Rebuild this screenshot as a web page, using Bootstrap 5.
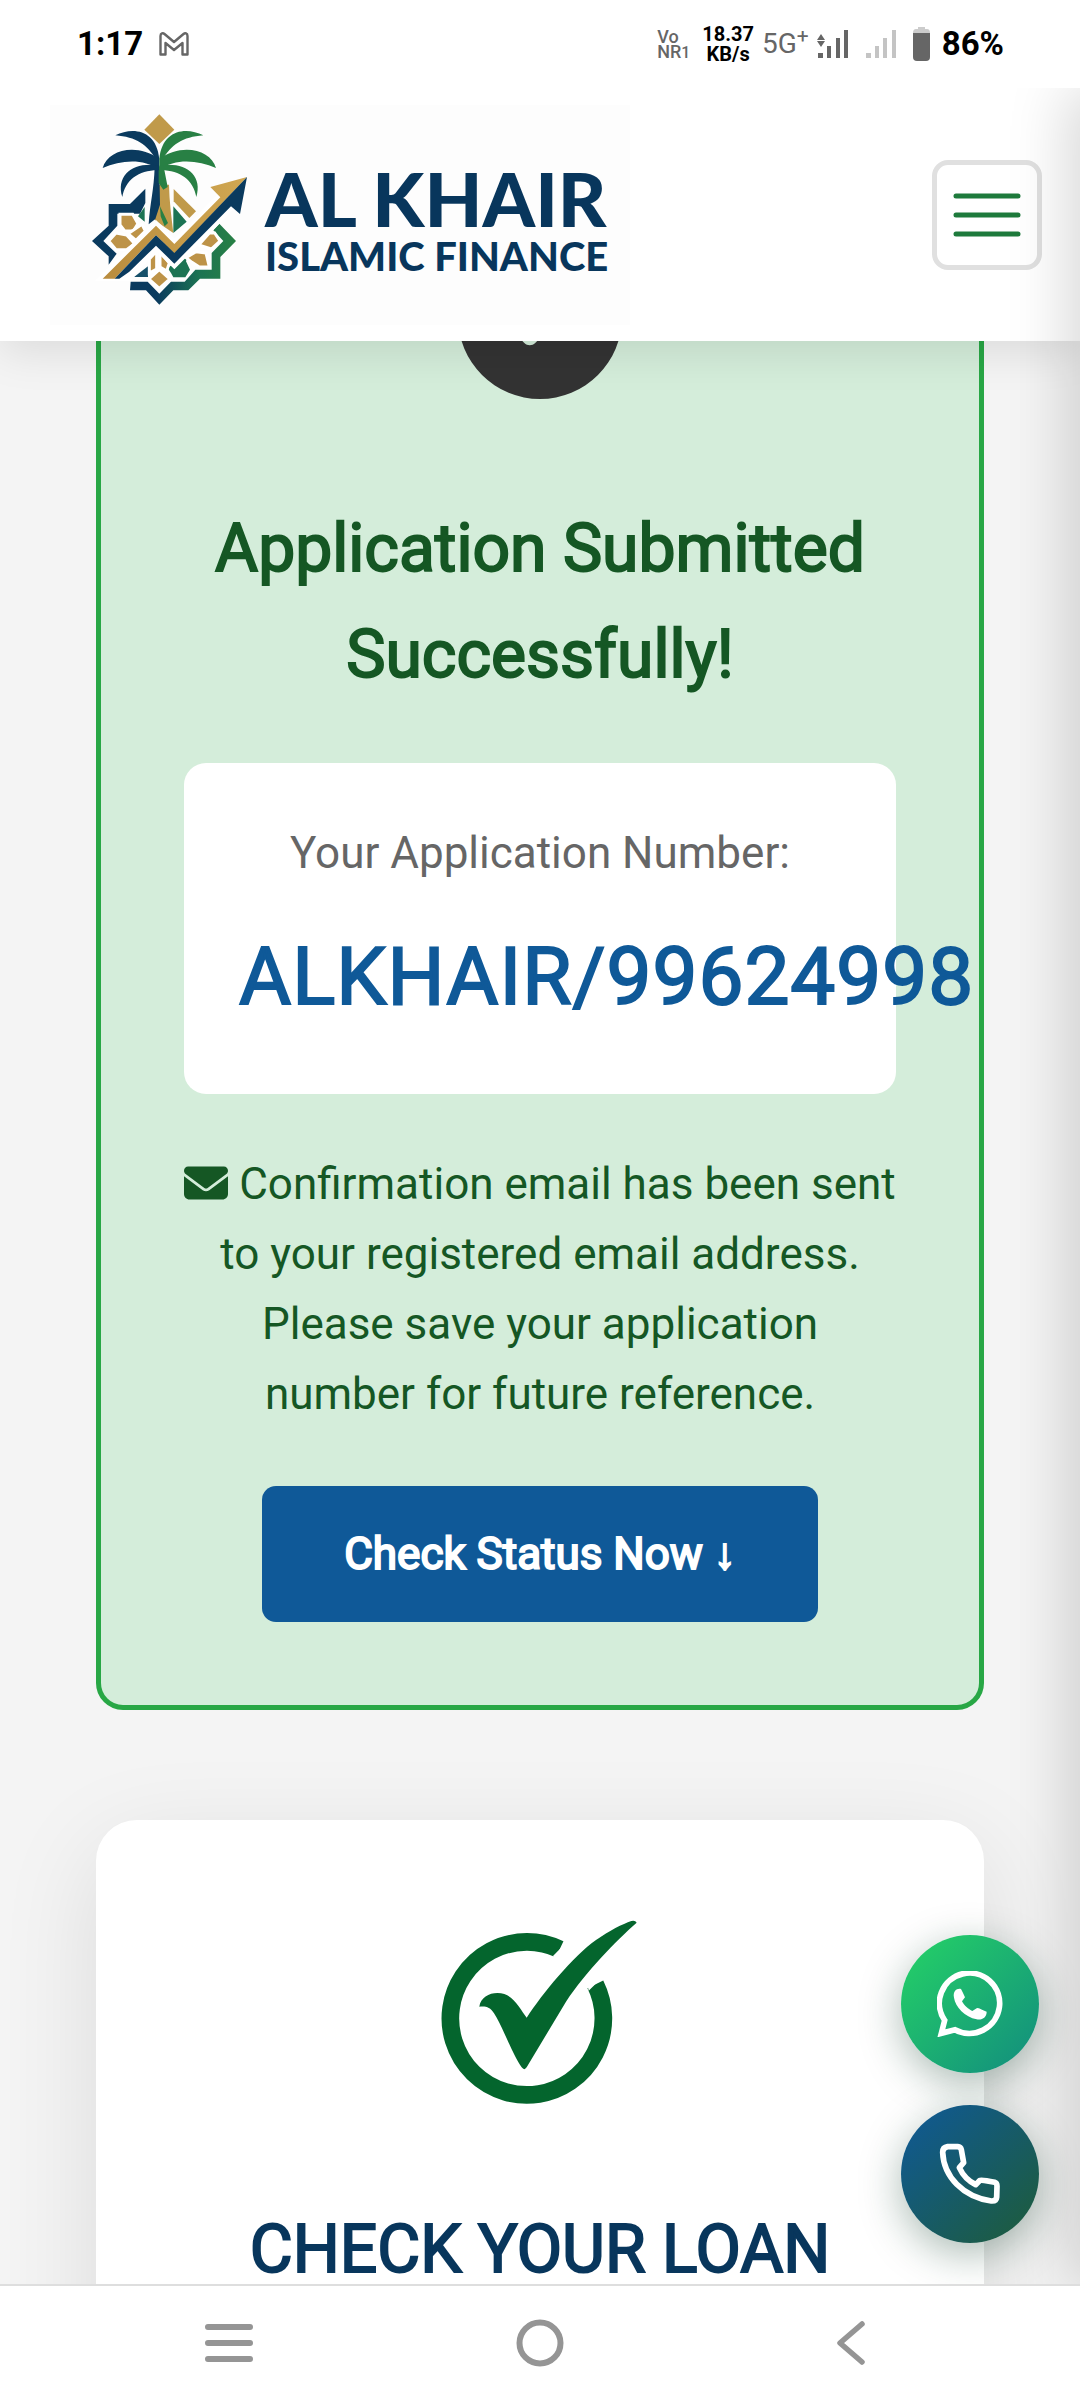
<!DOCTYPE html>
<html lang="en">
<head>
<meta charset="utf-8">
<meta name="viewport" content="width=device-width, initial-scale=1">
<title>Al Khair Islamic Finance</title>
<link href="https://cdn.jsdelivr.net/npm/bootstrap@5.3.0/dist/css/bootstrap.min.css" rel="stylesheet">
<style>
  body { font-family: Roboto, "Liberation Sans", sans-serif; background: #f4f4f4; height: 100vh; overflow: hidden; }
  svg { display: block; flex: none; }

  /* device status bar */
  .status-bar { height: 88px; padding: 0 76px 0 77px; color: #000; }
  .status-text { font-size: 33px; line-height: 40px; font-weight: 700; }
  .net-speed { font-size: 20px; line-height: 20px; font-weight: 700; text-align: center; }
  .volte { font-size: 18px; line-height: 15px; font-weight: 500; color: #666; }
  .net-type { font-size: 28px; line-height: 40px; color: #666; }

  /* site header */
  .site-header { position: relative; z-index: 10; height: 253px; padding: 17px 38px 17px 50px; background: #fff; box-shadow: 0 11px 41px rgba(0,0,0,.1); }
  .brand { width: 580px; height: 220px; padding: 0 25px 0 42px; gap: 17px; background: #fdfdfd; color: #08365c; text-decoration: none; font-family: Lato, "Open Sans", sans-serif; }
  .brand-name { font-size: 75px; line-height: 70px; font-weight: 900; }
  .brand-sub { font-size: 40px; line-height: 46px; font-weight: 900; }
  .brand-text { padding-top: 12px; }
  .emblem { margin-bottom: 10px; }
  .menu-btn { width: 110px; height: 110px; border: 5px solid #e0e0e0; border-radius: 16px; background: #fff; }

  .page-area { position: relative; z-index: 0; }
  .content-col { padding: 0 96px; }
  .heavy { -webkit-text-stroke: 2px currentColor; }

  .success-card { margin-top: -166px; padding: 55px 83px 83px; background: #d4edda; border: 5px solid #28a745; border-radius: 27px; color: #155724; text-align: center; }
  .success-card .tick { margin: 0 auto 97px; color: #333; }
  .panel-title { font-size: 66px; line-height: 106px; font-weight: 400; margin: 0; }
  .number-box { margin: 55px 0; padding: 55px 55px 54px; background: #fff; border-radius: 22px; }
  .body-text { font-size: 44px; line-height: 70px; margin: 0; }
  .number-label { color: #666; }
  .app-number { margin-top: 26px; font-size: 80px; line-height: 126px; color: #0f5998; font-weight: 400; letter-spacing: 1px; white-space: nowrap; }
  .mail-icon { display: inline-block; vertical-align: -6px; }
  .status-btn { margin-top: 57px; padding: 33px 82px; background: #0f5998; color: #fff; border: 0; border-radius: 14px; font-size: 44px; line-height: 70px; font-weight: 400; -webkit-text-stroke: 2px currentColor; }
  .status-btn:hover { background: #0c4a80; color: #fff; }

  .check-card { margin-top: 110px; padding: 100px 83px; background: #fff; border-radius: 41px; box-shadow: 0 28px 100px rgba(0,0,0,.1); color: #08365c; text-align: center; }
  .check-card .logo-check { margin: 0 auto 93px; }

  .fab-stack { position: absolute; z-index: 12; right: 41px; bottom: 41px; gap: 32px; }
  .fab { width: 138px; height: 138px; box-shadow: 0 11px 41px rgba(15,60,40,.35); }
  .fab-chat { background: linear-gradient(135deg, #25d366, #128c7e); }
  .fab-call { background: linear-gradient(135deg, #0f5998, #1e5c38); }

  .drawer { position: absolute; z-index: 11; top: 0; left: 100%; width: 300px; height: 100%; background: #fff; box-shadow: -14px 0 55px rgba(0,0,0,.15); }

  .nav-keys { position: relative; z-index: 20; height: 116px; background: #fff; border-top: 2px solid #dedede; color: #959595; }
  .nav-keys button { border: 0; background: none; padding: 0; color: inherit; width: 311px; height: 112px; }
</style>
</head>
<body class="d-flex flex-column">

<div class="status-bar bg-white d-flex align-items-center justify-content-between flex-shrink-0">
  <div class="d-flex align-items-center gap-3">
    <span class="status-text">1:17</span>
    <svg width="30" height="24" viewBox="0 0 30 24" fill="none" stroke="#666" stroke-width="2.4" stroke-linejoin="round"><path d="M1.500 4V22.500H6.500V11L15 18L23.500 11V22.500H28.500V4C28.500 1 26 .8 24.500 2L15 10L5.500 2C4 .8 1.500 1 1.500 4Z"/></svg>
  </div>
  <div class="d-flex align-items-center">
    <div class="volte me-2">Vo<br>NR<small>1</small></div>
    <div class="net-speed ms-1 me-2">18.37<br>KB/s</div>
    <span class="net-type me-2">5G<sup>+</sup></span>
    <svg class="me-3" width="32" height="30" viewBox="0 0 32 30" fill="#666"><path d="M4 5l4 6H0zM4 18l4-6H0zM1 24h5v5H1zM10 17h4v12h-4zM19 9h4v20h-4zM27 1h4v28h-4z"/></svg>
    <svg class="me-3" width="32" height="30" viewBox="0 0 32 30" fill="#c4c4c4"><path d="M1 24h5v5H1zM10 17h4v12h-4zM18 9h4v20h-4zM27 1h4v28h-4z"/></svg>
    <svg width="17" height="34" viewBox="0 0 17 34"><path d="M5 0h7v2h2q3 0 3 4H0q0-4 3-4h2z" fill="#ccc"/><path d="M0 6h17v24q0 4-4 4H4q-4 0-4-4z" fill="#666"/></svg>
    <span class="status-text ms-2 ps-1">86%</span>
  </div>
</div>

<div class="page-area flex-grow-1 overflow-hidden">
  <header class="site-header d-flex align-items-center justify-content-between">
    <a href="#" class="brand d-flex align-items-center">
      <svg class="emblem" width="156" height="191" viewBox="158 73 468 573">
        <defs>
          <linearGradient id="ring" x1="272" x2="590" gradientUnits="userSpaceOnUse"><stop offset=".25" stop-color="#0a3a5e"/><stop offset=".65" stop-color="#1c7353"/><stop offset="1" stop-color="#288044"/></linearGradient>
          <linearGradient id="gold" x1="0" x2="1"><stop stop-color="#b98c3e"/><stop offset="1" stop-color="#d1a852"/></linearGradient>
        </defs>
        <path fill="#c09a4a" d="M360 74L405 120L360 163L315 120Z"/>
        <path fill="#0a3a5e" d="M318 297V340L302 372H234V408L192 454L232 492L208 525V500L158 454L208 408V343H272Z"/>
        <path fill="url(#ring)" d="M272 602H320L360 645L402 602H447L482 567H543V502L590 454L540 402L522 422L552 454L517 490V540H468L436 576H395L360 612L325 576H274Z"/>
        <path fill="#1c7353" d="M402 350L442 396L402 430ZM316 352V396L296 380ZM385 535L448 488L440 515L452 540L438 563H402L395 550Z"/>
        <path fill="#16506a" d="M326 530V562H284Z"/>
        <path fill="#c09a4a" d="M403 298L470 365L450 385L403 335Z"/>
        <g fill="#bd9348" stroke="#fff" stroke-width="9">
          <path d="M242 374H280L296 402L282 424H256L242 406Z"/>
          <path d="M208 454L230 430L262 436L286 462L262 480H230Z"/>
          <path d="M266 432L308 404L318 424L290 452Z"/>
          <path d="M360 540L392 568L360 596L328 568Z"/>
          <path d="M352 484V538L330 550V508Z"/><path d="M362 486L390 520L382 544L362 532Z"/>
          <path d="M478 466L510 430H526L542 454L516 478Z"/>
          <path d="M440 504L470 486L500 490L510 532H480L458 518Z"/>
        </g>
        <path fill="#c09a4a" d="M357 285L389 285C390 335 396 380 402 430L372 410L346 390Z"/>
        <path fill="#0a3a5e" d="M346 232C344 300 332 340 328 404L348 388L362 345L360 232Z"/>
        <path fill="#288044" d="M358 232L374 236L385 292L372 300L358 280ZM362 350L386 400L376 410L364 380Z"/>
        <g fill="#0a3a5e"><path d="M228 137C280 110 352 120 360 208L350 210C325 165 290 142 228 137Z"/><path d="M190 235C205 182 290 158 360 208V240C310 205 245 212 190 235Z"/><path d="M249 322C228 255 285 214 360 228V242C300 240 258 270 249 322Z"/></g>
        <g fill="#288044" transform="translate(720 0) scale(-1 1)"><path d="M228 137C280 110 352 120 360 208L350 210C325 165 290 142 228 137Z"/><path d="M190 235C205 182 290 158 360 208V240C310 205 245 212 190 235Z"/><path d="M249 322C228 255 285 214 360 228V242C300 240 258 270 249 322Z"/></g>
        <path fill="#fff" stroke="#fff" stroke-width="24" d="M195 562L350 408L405 463L540 325L575 350L405 522L350 468L268 562Z"/>
        <path fill="url(#gold)" d="M190 567L350 408L405 463L543 323L513 292L623 262L405 492L350 437L226 567Z"/>
        <path fill="#0a3a5e" d="M226 567L350 437L405 490L623 262L602 373L575 350L405 522L350 468L270 546L240 567Z"/>
      </svg>
      <span class="brand-text d-flex flex-column text-nowrap">
        <span class="brand-name">AL KHAIR</span>
        <span class="brand-sub">ISLAMIC FINANCE</span>
      </span>
    </a>
    <button type="button" class="menu-btn d-flex align-items-center justify-content-center p-0" aria-label="Open menu">
      <svg width="68" height="46" viewBox="0 0 68 46" stroke="#1e7a3c" stroke-width="5" stroke-linecap="round"><path d="M3 4H65M3 23H65M3 42H65"/></svg>
    </button>
  </header>

  <main class="content-col">
    <section class="success-card">
      <svg class="tick" width="164" height="164" viewBox="0 0 512 512" fill="currentColor"><path d="M256 512A256 256 0 1 0 256 0a256 256 0 1 0 0 512zM369 209L241 337c-9.400 9.400-24.600 9.400-33.900 0l-64-64c-9.400-9.400-9.400-24.600 0-33.900s24.600-9.400 33.900 0l47 47L335 175c9.400-9.400 24.600-9.400 33.900 0s9.400 24.600 0 33.900z"/></svg>
      <h2 class="panel-title heavy">Application Submitted Successfully!</h2>
      <div class="number-box">
        <p class="body-text number-label">Your Application Number:</p>
        <div class="app-number heavy">ALKHAIR/99624998</div>
      </div>
      <p class="body-text"><svg class="mail-icon" width="44" height="44" viewBox="0 0 512 512" fill="currentColor"><path d="M48 64C21.500 64 0 85.500 0 112c0 15.100 7.100 29.300 19.200 38.400L236.800 313.600c11.400 8.500 27 8.500 38.400 0L492.800 150.400c12.100-9.100 19.200-23.300 19.200-38.400c0-26.500-21.500-48-48-48H48zM0 176V384c0 35.300 28.700 64 64 64H448c35.300 0 64-28.700 64-64V176L294.400 339.200c-22.800 17.100-54 17.100-76.800 0L0 176z"/></svg> Confirmation email has been sent to your registered email address. Please save your application number for future reference.</p>
      <button type="button" class="btn status-btn">Check Status Now ↓</button>
    </section>

    <section class="check-card">
      <svg class="logo-check" width="220" height="184" viewBox="92 120 660 552">
        <path fill="none" stroke="#04652d" stroke-width="53" d="M481 208A229.500 229.500 0 1 0 588 313"/>
        <path fill="#fff" d="M461 228L500 188L540 160L480 260ZM568 332L607 294L640 250L560 290Z"/>
        <path fill="#04652d" d="M240 380C244 345 285 332 315 342C345 352 365 390 382 413C430 340 520 230 590 180C630 152 670 132 696 123Q708 120 712 128C650 182 560 275 500 365L382 562Q375 573 367 562C340 525 310 440 284 400C272 381 260 378 240 380Z"/>
      </svg>
      <h2 class="panel-title heavy">CHECK YOUR LOAN</h2>
    </section>
  </main>

  <aside class="drawer" aria-hidden="true"></aside>

  <div class="fab-stack d-flex flex-column">
    <a href="#" class="fab fab-chat rounded-circle d-flex align-items-center justify-content-center" aria-label="WhatsApp">
      <svg width="66" height="66" viewBox="231 212 198 198"><path fill="none" stroke="#fff" stroke-width="17" d="M285 388A90.500 90.500 0 1 0 254 360L244 399Z"/><path fill="#fff" d="M282 292C278 272 291 263 303 266L308 276L315 291L306 303C312 315 326 327 337 332L350 324Q354 321 366 328L380 334C380 350 368 360 350 357C315 350 286 320 282 292Z"/></svg>
    </a>
    <a href="#" class="fab fab-call rounded-circle d-flex align-items-center justify-content-center" aria-label="Call us">
      <svg width="62" height="62" viewBox="238 729 186 186"><path fill="none" stroke="#fff" stroke-width="17" stroke-linejoin="round" d="M264 740H294Q303 741 305 749L312 788L299 803Q315 838 348 854L361 841Q365 838 405 847Q412 849 412 859L411 892Q410 904 395 903C310 890 252 830 249 757Q249 742 264 740Z"/></svg>
    </a>
  </div>
</div>

<nav class="nav-keys d-flex align-items-center justify-content-center flex-shrink-0" aria-label="Device navigation">
  <button type="button" aria-label="Recent apps"><svg class="mx-auto" width="50" height="40" viewBox="0 0 50 40" stroke="currentColor" stroke-width="6" stroke-linecap="round"><path d="M4 4H46M4 20H46M4 36H46"/></svg></button>
  <button type="button" aria-label="Home"><svg class="mx-auto" width="48" height="48" viewBox="0 0 48 48" fill="none" stroke="currentColor" stroke-width="6"><circle cx="24" cy="24" r="20.500"/></svg></button>
  <button type="button" aria-label="Back"><svg class="mx-auto" width="30" height="46" viewBox="0 0 30 46" fill="none" stroke="currentColor" stroke-width="5.500" stroke-linecap="round" stroke-linejoin="round"><path d="M26 4L4 23L26 42"/></svg></button>
</nav>

<script src="https://cdn.jsdelivr.net/npm/bootstrap@5.3.0/dist/js/bootstrap.bundle.min.js"></script>
</body>
</html>
